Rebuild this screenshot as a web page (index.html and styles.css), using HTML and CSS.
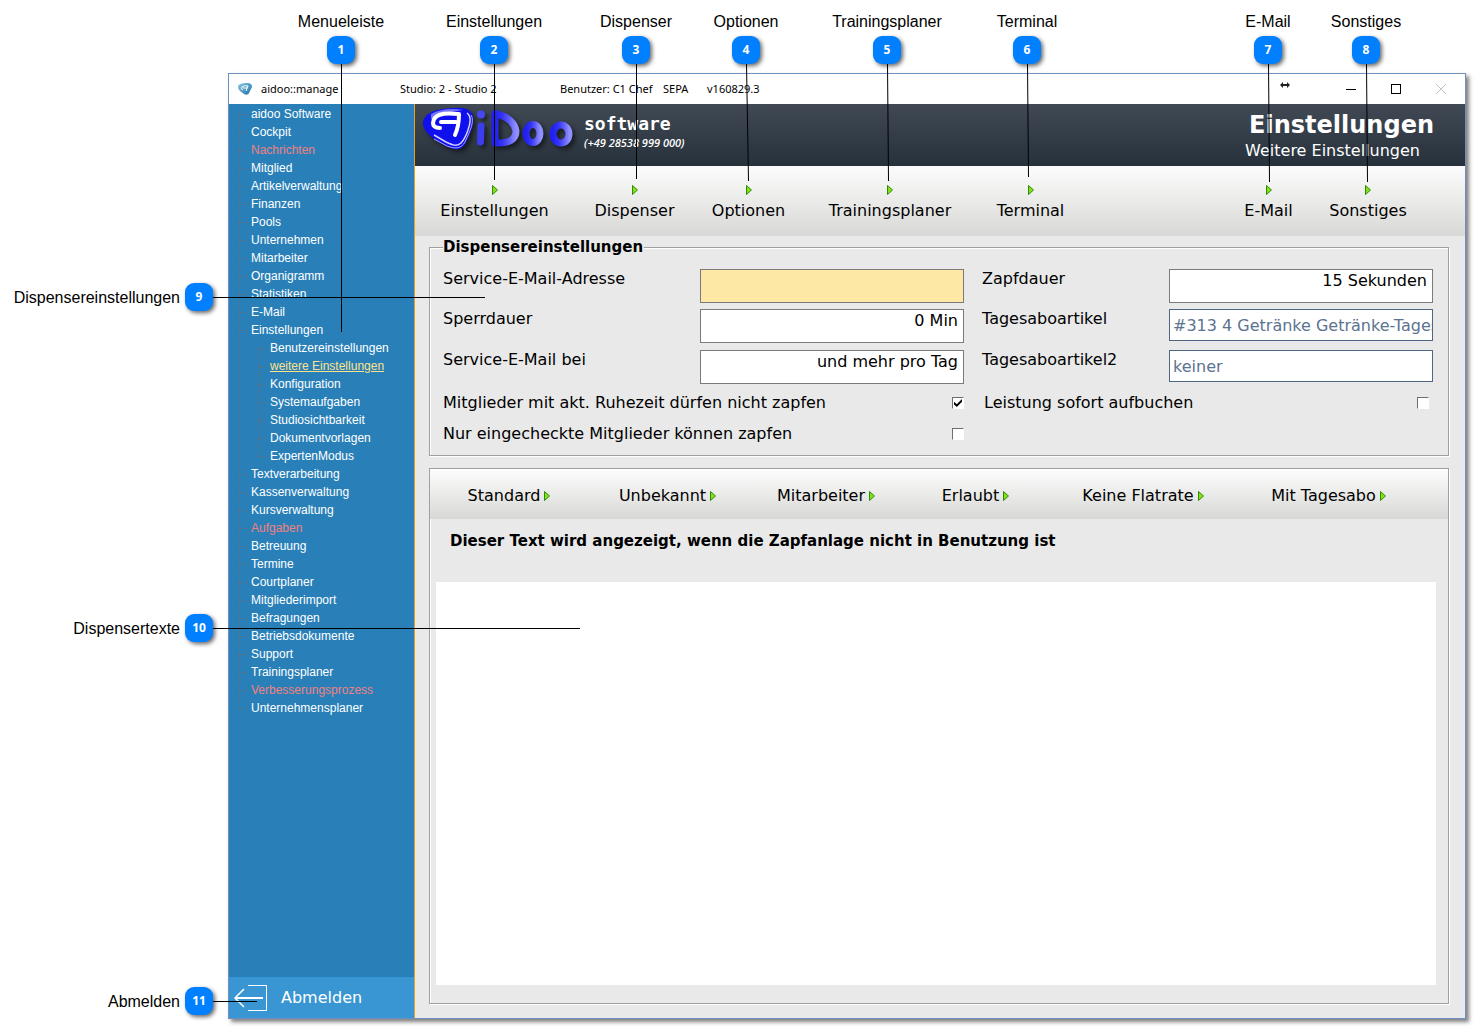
FILE: index.html
```html
<!DOCTYPE html>
<html lang="de">
<head>
<meta charset="utf-8">
<title>aidoo::manager – Weitere Einstellungen</title>
<link rel="stylesheet" href="styles.css">
</head>
<body>
<svg class="defs" aria-hidden="true">
  <defs>
    <linearGradient id="g-arrow" x1="0" y1="0" x2="1" y2="1"><stop offset="0" stop-color="#7ddc10"/><stop offset="1" stop-color="#8ae61a"/></linearGradient>
    <linearGradient id="g-word" x1="0" y1="0" x2="1" y2="0"><stop offset="0" stop-color="#2020f0"/><stop offset=".35" stop-color="#3434f6"/><stop offset=".65" stop-color="#5a5afa"/><stop offset="1" stop-color="#8f8fff"/></linearGradient>
    <linearGradient id="g-app" x1="0" y1="0" x2="1" y2="1"><stop offset="0" stop-color="#8cc8e6"/><stop offset="1" stop-color="#1b6fa6"/></linearGradient>
    <symbol id="arrow" viewBox="0 0 6 10"><path d="M.5 .5 L5.500 5 L.5 9.500 Z" fill="url(#g-arrow)" stroke="#2f8a08"/></symbol>
  </defs>
</svg>

<div class="window">
  <header class="titlebar">
    <svg class="app-icon" viewBox="0 0 16 14" aria-hidden="true">
      <path d="M1 5 C1 2 5 1 10 1 C14 1 15 3 15 5 L12 11 C11 13 9 13 7 12 L3 9 Q1 7 1 5Z" fill="url(#g-app)"/>
      <path d="M6 8 Q3 7 5 5 Q7 3 11 4 L9 9 M6 6 H10" fill="none" stroke="#fff"/>
    </svg>
    <span class="app-name">aidoo::manage</span>
    <span class="studio">Studio: 2 - Studio 2</span>
    <span class="user">Benutzer: C1 Chef</span>
    <span class="sepa">SEPA</span>
    <span class="version">v160829.3</span>
    <svg class="resize" viewBox="0 0 10 6" aria-hidden="true"><path d="M0 3 L3 0 V2 H7 V0 L10 3 L7 6 V4 H3 V6 Z" fill="#222"/></svg>
    <button class="win-btn" type="button" aria-label="Minimieren"><svg viewBox="0 0 10 10"><path d="M0 5.500 H10" stroke="#000"/></svg></button>
    <button class="win-btn" type="button" aria-label="Maximieren"><svg viewBox="0 0 10 10"><rect x=".5" y=".5" width="9" height="9" fill="none" stroke="#000"/></svg></button>
    <button class="win-btn" type="button" aria-label="Schließen"><svg viewBox="0 0 10 10"><path d="M0 0 L10 10 M10 0 L0 10" stroke="#c4c4c4"/></svg></button>
  </header>

  <div class="body">
    <aside class="sidebar">
      <nav aria-label="Menüleiste">
        <ul class="tree">
          <li><a href="#">aidoo Software</a></li>
          <li><a href="#">Cockpit</a></li>
          <li><a href="#" class="alert">Nachrichten</a></li>
          <li><a href="#">Mitglied</a></li>
          <li><a href="#">Artikelverwaltung</a></li>
          <li><a href="#">Finanzen</a></li>
          <li><a href="#">Pools</a></li>
          <li><a href="#">Unternehmen</a></li>
          <li><a href="#">Mitarbeiter</a></li>
          <li><a href="#">Organigramm</a></li>
          <li><a href="#">Statistiken</a></li>
          <li><a href="#">E-Mail</a></li>
          <li><a href="#">Einstellungen</a>
            <ul>
              <li><a href="#">Benutzereinstellungen</a></li>
              <li><a href="#" class="current">weitere Einstellungen</a></li>
              <li><a href="#">Konfiguration</a></li>
              <li><a href="#">Systemaufgaben</a></li>
              <li><a href="#">Studiosichtbarkeit</a></li>
              <li><a href="#">Dokumentvorlagen</a></li>
              <li><a href="#">ExpertenModus</a></li>
            </ul>
          </li>
          <li><a href="#">Textverarbeitung</a></li>
          <li><a href="#">Kassenverwaltung</a></li>
          <li><a href="#">Kursverwaltung</a></li>
          <li><a href="#" class="alert">Aufgaben</a></li>
          <li><a href="#">Betreuung</a></li>
          <li><a href="#">Termine</a></li>
          <li><a href="#">Courtplaner</a></li>
          <li><a href="#">Mitgliederimport</a></li>
          <li><a href="#">Befragungen</a></li>
          <li><a href="#">Betriebsdokumente</a></li>
          <li><a href="#">Support</a></li>
          <li><a href="#">Trainingsplaner</a></li>
          <li><a href="#" class="alert">Verbesserungsprozess</a></li>
          <li><a href="#">Unternehmensplaner</a></li>
        </ul>
      </nav>
      <button class="logout" type="button">
        <svg viewBox="0 0 34 28" aria-hidden="true"><path d="M13 1.500 H31.500 V26.500 H13" fill="none" stroke="#fff"/><path d="M1 14 H28" stroke="#fff" stroke-width="2"/><path d="M9 5 L0 14 L9 23" fill="none" stroke="#fff" stroke-width="1.500"/></svg>
        Abmelden
      </button>
    </aside>

    <main class="main">
      <div class="banner">
        <svg class="logo" viewBox="0 0 160 56" role="img" aria-label="aiDoo">
          <g class="logo-shadow">
            <path d="M3 18 C5 8 18 4 36 4 C47 3 55 8 53 18 C52 27 48 35 45 40 C41 47 35 46 28 43 C19 39 2 29 3 18Z" fill="#1010ee"/>
            <path d="M47 9 C52 13 50 20 48 26 C46 32 43 37 41 39 C37 43 32 41 26 38 L14 31" fill="none" stroke="#d0d0ff" stroke-width="1.500"/>
            <path d="M51 11 C55 17 50 27 45 38 C41 45 35 45 27 42 L14 35" fill="none" stroke="#a4a4f8"/>
            <path d="M11 10 Q24 3 43 6 Q28 8 11 15Z" fill="#9c9cff" opacity=".7"/>
            <path d="M38 10 Q14 7 13 19 Q13 24 20 24 M21 18 H36 M39 10 Q39 22 35 31" fill="none" stroke="#fff" stroke-width="4" stroke-linecap="round"/>
            <g fill="none" stroke="url(#g-word)">
              <path d="M61 22 L60.500 38" stroke="#3c3cf0" stroke-width="7" stroke-linecap="round"/>
              <circle cx="61" cy="10.500" r="4" fill="#4646f2" stroke="none"/>
              <path d="M75 9.500 V39 Q96 40 96 27 Q94 14 75 9.500Z" stroke-width="7" stroke-linejoin="round"/>
              <ellipse cx="113" cy="29.500" rx="7" ry="9" stroke-width="7"/>
              <ellipse cx="141" cy="30" rx="8" ry="9" stroke-width="7"/>
            </g>
          </g>
        </svg>
        <div class="brand"><span class="brand-name">software</span><span class="brand-phone">(+49 28538 999 000)</span></div>
        <div class="heading"><h1>Einstellungen</h1><p>Weitere Einstellungen</p></div>
      </div>

      <div class="toolbar">
        <button type="button"><svg class="arrow"><use href="#arrow"/></svg>Einstellungen</button>
        <button type="button"><svg class="arrow"><use href="#arrow"/></svg>Dispenser</button>
        <button type="button"><svg class="arrow"><use href="#arrow"/></svg>Optionen</button>
        <button type="button"><svg class="arrow"><use href="#arrow"/></svg>Trainingsplaner</button>
        <button type="button"><svg class="arrow"><use href="#arrow"/></svg>Terminal</button>
        <span></span>
        <button type="button"><svg class="arrow"><use href="#arrow"/></svg>E-Mail</button>
        <button type="button"><svg class="arrow"><use href="#arrow"/></svg>Sonstiges</button>
      </div>

      <div class="content">
        <fieldset class="panel settings">
          <legend>Dispensereinstellungen</legend>
          <div class="fields">
            <label for="mail">Service-E-Mail-Adresse</label><input id="mail" class="required" type="text">
            <label class="second" for="zapf">Zapfdauer</label><input id="zapf" type="text" value="15 Sekunden">
            <label for="sperr">Sperrdauer</label><input id="sperr" type="text" value="0 Min">
            <label class="second" for="abo1">Tagesaboartikel</label><select id="abo1"><option>#313 4 Getränke Getränke-Tagesabo</option></select>
            <label for="bei">Service-E-Mail bei</label><input id="bei" type="text" value="und mehr pro Tag">
            <label class="second" for="abo2">Tagesaboartikel2</label><select id="abo2"><option>keiner</option></select>
          </div>
          <div class="checks">
            <label>Mitglieder mit akt. Ruhezeit dürfen nicht zapfen<input type="checkbox" checked></label>
            <label class="second">Leistung sofort aufbuchen<input type="checkbox"></label>
            <label>Nur eingecheckte Mitglieder können zapfen<input type="checkbox"></label>
          </div>
        </fieldset>

        <section class="panel texts">
          <div class="tabs">
            <button type="button">Standard<svg class="arrow"><use href="#arrow"/></svg></button>
            <button type="button">Unbekannt<svg class="arrow"><use href="#arrow"/></svg></button>
            <button type="button">Mitarbeiter<svg class="arrow"><use href="#arrow"/></svg></button>
            <button type="button">Erlaubt<svg class="arrow"><use href="#arrow"/></svg></button>
            <button type="button">Keine Flatrate<svg class="arrow"><use href="#arrow"/></svg></button>
            <button type="button">Mit Tagesabo<svg class="arrow"><use href="#arrow"/></svg></button>
          </div>
          <label class="text-title" for="idle">Dieser Text wird angezeigt, wenn die Zapfanlage nicht in Benutzung ist</label>
          <textarea id="idle"></textarea>
        </section>
      </div>
    </main>
  </div>
</div>

<div class="callout top n1"><span>Menueleiste</span><b>1</b><svg viewBox="0 0 4 268"><path d="M2.500 0 V268"/></svg></div>
<div class="callout top n2"><span>Einstellungen</span><b>2</b><svg viewBox="0 0 4 116"><path d="M2.500 0 V116"/></svg></div>
<div class="callout top n3"><span>Dispenser</span><b>3</b><svg viewBox="0 0 4 115"><path d="M2.500 0 V115"/></svg></div>
<div class="callout top n4"><span>Optionen</span><b>4</b><svg viewBox="0 0 4 117"><path d="M2.500 0 L4.500 117"/></svg></div>
<div class="callout top n5"><span>Trainingsplaner</span><b>5</b><svg viewBox="0 0 4 117"><path d="M2.500 0 L3.500 117"/></svg></div>
<div class="callout top n6"><span>Terminal</span><b>6</b><svg viewBox="0 0 4 113"><path d="M2.500 0 L3.500 113"/></svg></div>
<div class="callout top n7"><span>E-Mail</span><b>7</b><svg viewBox="0 0 4 118"><path d="M2.500 0 L3.500 118"/></svg></div>
<div class="callout top n8"><span>Sonstiges</span><b>8</b><svg viewBox="0 0 4 118"><path d="M2.500 0 L3.500 118"/></svg></div>
<div class="callout side n9"><span>Dispensereinstellungen</span><b>9</b><i></i></div>
<div class="callout side n10"><span>Dispensertexte</span><b>10</b><i></i></div>
<div class="callout side n11"><span>Abmelden</span><b>11</b><i></i></div>
</body>
</html>
```

FILE: styles.css
```css
* { box-sizing: border-box; }

body {
  margin: 0;
  padding: 73px 9px 9px 228px;
  min-height: 100vh;
  display: flex;
  position: relative;
  background: #fff;
  color: #000;
  font: 16px/20px "DejaVu Sans", sans-serif;
}

button, input, select, textarea { font: inherit; color: inherit; }
button { border: 0; padding: 0; background: none; }
ul { list-style: none; margin: 0; padding: 0; }
.defs { position: absolute; width: 0; height: 0; }
.arrow { width: 6px; height: 10px; display: block; flex: none; }

/* Window frame */
.window {
  flex: 1;
  min-width: 0;
  display: flex;
  flex-direction: column;
  border: 1px solid #6f8fc0;
  background: #e9e9e9;
  box-shadow: 3px 3px 4px rgba(0, 0, 0, .5);
}

.titlebar {
  display: flex;
  align-items: center;
  height: 30px;
  padding: 0 8px;
  background: #fff;
  font: 11px/16px "Noto Sans", sans-serif;
  white-space: nowrap;
}
.app-icon { width: 16px; height: 14px; margin-right: 8px; }
.app-name { width: 139px; }
.studio { width: 160px; }
.user { width: 103px; }
.sepa { width: 44px; }
.version { flex: 1; }
.resize { width: 10px; height: 6px; margin: -8px 38px 0 0; }
.win-btn { width: 45px; height: 30px; display: grid; place-items: center; }
.win-btn:last-child { width: 46px; margin-right: -7px; }
.win-btn svg { width: 10px; height: 10px; display: block; }

.body { flex: 1; display: flex; }

/* Navigation */
.sidebar {
  flex: none;
  width: 186px;
  display: flex;
  flex-direction: column;
  justify-content: space-between;
  border-right: 1px solid #e8a020;
  background: #2980b9;
  color: #fff;
  font: 12px/18px "Liberation Sans", sans-serif;
}
.tree { margin: 1px 0 0 10px; }
.tree li { position: relative; padding-left: 12px; }
.tree li::before {
  content: "";
  position: absolute;
  left: 0;
  top: 9px;
  width: 8px;
  border-top: 1px dotted #69707c;
}
.tree li::after {
  content: "";
  position: absolute;
  left: 0;
  top: 9px;
  height: 100%;
  border-left: 1px dotted #69707c;
}
.tree li:last-child::after { display: none; }
.tree ul { margin-left: 7px; }
.tree a { display: block; color: #fff; text-decoration: none; }
.tree a.alert { color: #f08080; }
.tree a.current { color: #fde28b; text-decoration: underline; }

.logout {
  display: flex;
  align-items: center;
  gap: 12px;
  height: 41px;
  padding-left: 6px;
  background: #3996d3;
  color: #fff;
  font: 16px/20px "DejaVu Sans", sans-serif;
}
.logout svg { width: 34px; height: 28px; overflow: visible; }

/* Main area */
.main { flex: 1; min-width: 0; display: flex; flex-direction: column; }

.banner {
  display: flex;
  height: 62px;
  padding: 0 31px 0 5px;
  background: linear-gradient(#414a54, #27313b);
  color: #fff;
}
.logo { width: 160px; height: 56px; }
.logo-shadow { filter: drop-shadow(3px 3px 2px rgba(0, 0, 0, .5)); }
.brand { display: flex; flex-direction: column; padding: 10px 0 0 4px; }
.brand-name { font: bold 18px/20px "DejaVu Sans Mono", monospace; }
.brand-phone { font: italic 600 11px/18px "Open Sans", sans-serif; }
.heading { margin-left: auto; text-align: right; }
.heading h1 { margin: 6px 0 0; font-size: 24px; line-height: 30px; }
.heading p { margin: 1px 14px 0 0; }

.toolbar {
  display: grid;
  grid-template-columns: 159px 121px 107px 176px 105px 1fr 99px 100px;
  height: 70px;
  padding-right: 47px;
  background: linear-gradient(#fcfcfc, #d8d8d6);
}
.toolbar button {
  display: flex;
  flex-direction: column;
  align-items: center;
  gap: 6px;
  padding-top: 19px;
}

.content {
  flex: 1;
  display: flex;
  flex-direction: column;
  gap: 12px;
  padding: 1px 16px 14px 14px;
}
.panel {
  margin: 0;
  min-width: 0;
  border: 1px solid #a0a0a0;
  box-shadow: 1px 1px 0 #fff, inset 1px 1px 0 #fff;
}

.settings { padding: 0 15px 11px 13px; }
.settings legend {
  padding: 0 1px 0 0;
  background: #e9e9e9;
  font-size: 15px;
  font-weight: bold;
}
.fields {
  display: grid;
  grid-template-columns: 257px minmax(0, 1fr) 205px minmax(0, 1fr);
  grid-template-rows: 34px 35px 34px;
  row-gap: 6px;
  padding-top: 12px;
}
.fields .second { padding-left: 18px; }
.fields input, .fields select {
  width: 100%;
  height: 34px;
  margin: 0;
  border: 1px solid #7a7a7a;
  border-radius: 0;
  background: #fff;
}
.fields input { padding: 0 5px 12px; text-align: right; }
.fields .required { background: #fde8a5; }
.fields select {
  height: 32px;
  padding: 2px 0 0 3px;
  border-color: #4f6682;
  color: #5c7390;
  appearance: none;
}

.checks {
  display: grid;
  grid-template-columns: minmax(0, 521fr) minmax(0, 449fr);
  column-gap: 20px;
  row-gap: 11px;
  padding: 9px 0 0;
}
.checks label { display: flex; justify-content: space-between; align-items: center; }
.checks .second { padding-right: 4px; }
.checks input {
  appearance: none;
  width: 12px;
  height: 12px;
  margin: 0;
  border: 1px solid;
  border-color: #6e6e6e #fff #fff #6e6e6e;
  background: #fff;
  display: grid;
  place-items: center;
}
.checks input:checked::before {
  content: "";
  width: 8px;
  height: 8px;
  background: #000;
  clip-path: polygon(0 35%, 35% 65%, 100% 0, 100% 35%, 35% 100%, 0 70%);
}

.texts { flex: 1; display: flex; flex-direction: column; padding: 1px 0 18px; }
.tabs {
  display: grid;
  grid-template-columns: 158fr 159fr 158fr 141fr 194fr 177fr 31fr;
  height: 49px;
  padding-top: 2px;
  background: linear-gradient(#fcfcfc, #d8d8d6);
}
.tabs button { display: flex; align-items: center; justify-content: center; gap: 4px; }
.text-title { padding: 12px 20px 31px; font-size: 15px; font-weight: bold; }
.texts textarea {
  flex: 1;
  margin: 0 12px 0 6px;
  border: 0;
  padding: 6px;
  background: #fff;
  resize: none;
}

/* Numbered callouts over the window */
.callout {
  position: absolute;
  display: flex;
  align-items: center;
  font: 16px/20px "Liberation Sans", sans-serif;
  white-space: nowrap;
  pointer-events: none;
}
.callout b {
  width: 28px;
  height: 28px;
  flex: none;
  border-radius: 9px;
  background: #0080ff;
  box-shadow: 2px 2px 4px rgba(0, 0, 0, .6);
  color: #fff;
  font: bold 12px/28px "Open Sans", sans-serif;
  text-align: center;
}
.callout svg { width: 4px; display: block; overflow: visible; fill: none; stroke: #000; }
.callout i { height: 1px; background: #000; }
.top { top: 12px; flex-direction: column; width: 140px; }
.top b { margin-top: 4px; }
.n1 { left: 271px; }
.n2 { left: 424px; }
.n3 { left: 566px; }
.n4 { left: 676px; }
.n5 { left: 817px; }
.n6 { left: 957px; }
.n7 { left: 1198px; }
.n8 { left: 1296px; }
.side { left: 0; }
.side span { width: 180px; margin-right: 5px; padding-top: 2px; text-align: right; }
.n9 { top: 283px; }
.n9 i { width: 272px; }
.n10 { top: 614px; }
.n10 i { width: 367px; }
.n11 { top: 987px; }
.n11 i { width: 44px; }
```
